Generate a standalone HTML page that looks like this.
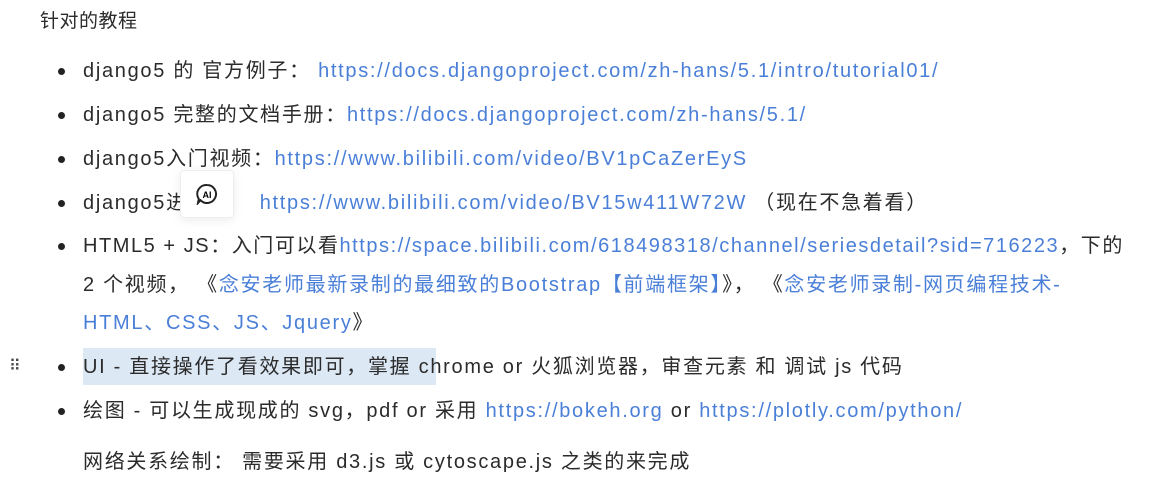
<!DOCTYPE html>
<html><head><meta charset="utf-8"><style>
body{margin:0;width:1154px;height:496px;background:#fff;overflow:hidden;position:relative;font-family:"Liberation Sans","Noto Sans CJK SC",sans-serif;font-size:20px;letter-spacing:1.7px;color:#2b2b2b}
.l{position:absolute;white-space:nowrap;line-height:24px}
a{color:#4a7fd8;text-decoration:none}
.b{position:absolute;width:7px;height:7px;border-radius:50%;background:#222}
</style></head><body>
<div class="l" style="left:40px;top:10px;letter-spacing:0.5px;font-size:19px">针对的教程</div>

<div class="b" style="left:58px;top:68px"></div>
<div class="l" style="left:83px;top:59px">django5 的 官方例子： <a style="margin-left:0px">https://docs.djangoproject.com/zh-hans/5.1/intro/tutorial01/</a></div>
<div class="b" style="left:58px;top:112px"></div>
<div class="l" style="left:83px;top:103px">django5 完整的文档手册：<a>https://docs.djangoproject.com/zh-hans/5.1/</a></div>
<div class="b" style="left:58px;top:156px"></div>
<div class="l" style="left:83px;top:147px">django5入门视频：<a>https://www.bilibili.com/video/BV1pCaZerEyS</a></div>
<div class="b" style="left:58px;top:200px"></div>
<div class="l" style="left:83px;top:191px">django5进阶：&nbsp;&nbsp;<a style="margin-left:14px">https://www.bilibili.com/video/BV15w411W72W</a> （现在不急着看）</div>
<div style="position:absolute;left:180px;top:170px;width:52px;height:46px;background:#fff;border:1px solid #eee;border-radius:4px;box-shadow:0 2px 10px rgba(0,0,0,.08)">
<svg width="22" height="22" viewBox="0 0 22 22" style="position:absolute;left:15px;top:12px"><path d="M11 2a9 9 0 1 1-6.5 15.2L2 20l.8-4A9 9 0 0 1 11 2z" fill="none" stroke="#222" stroke-width="2"/><text x="11" y="15" font-size="9" font-weight="bold" text-anchor="middle" font-family="Liberation Sans" letter-spacing="0">AI</text></svg></div>
<div class="b" style="left:58px;top:243px"></div>
<div class="l" style="left:83px;top:234px;letter-spacing:1.55px">HTML5 + JS：入门可以看<a>https://space.bilibili.com/618498318/channel/seriesdetail?sid=716223</a>，下的</div>
<div class="l" style="left:83px;top:273px">2 个视频， 《<a>念安老师最新录制的最细致的Bootstrap【前端框架】</a>》， 《<a>念安老师录制-网页编程技术-</a></div>
<div class="l" style="left:83px;top:311px"><a>HTML、CSS、JS、Jquery</a>》</div>
<div style="position:absolute;left:83px;top:348px;width:353px;height:37px;background:#dde8f5"></div>
<div class="l" style="left:9px;top:355px;font-size:16px;letter-spacing:-1px;color:#444">⠿</div>
<div class="b" style="left:58px;top:364px"></div>
<div class="l" style="left:83px;top:355px">UI - 直接操作了看效果即可，掌握 chrome or 火狐浏览器，审查元素 和 调试 js 代码</div>
<div class="b" style="left:58px;top:408px"></div>
<div class="l" style="left:83px;top:399px">绘图 - 可以生成现成的 svg，pdf or 采用 <a>https://bokeh.org</a> or <a>https://plotly.com/python/</a></div>
<div class="l" style="left:83px;top:450px">网络关系绘制： 需要采用 d3.js 或 cytoscape.js 之类的来完成</div>
</body></html>
